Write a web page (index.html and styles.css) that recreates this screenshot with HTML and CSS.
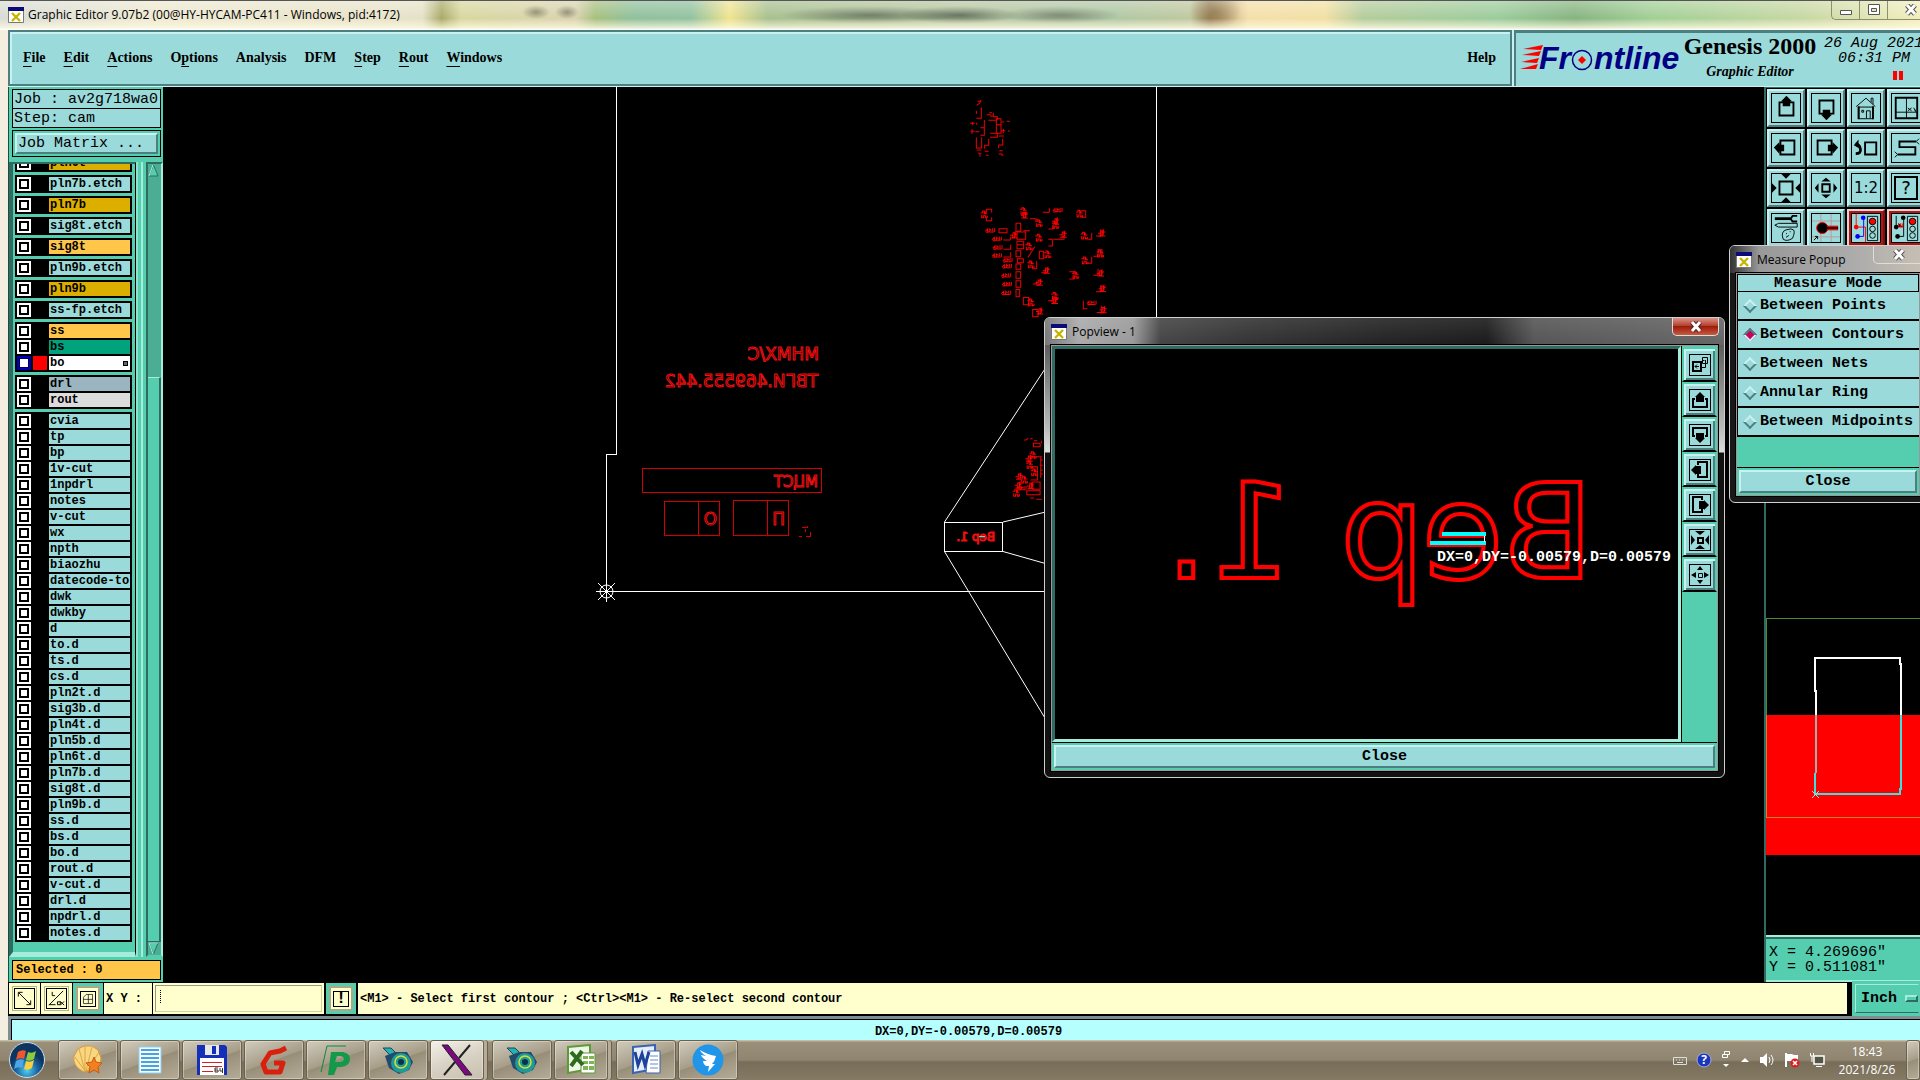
FILE: index.html
```html
<!DOCTYPE html>
<html lang="en">
<head>
<meta charset="utf-8">
<title>Graphic Editor 9.07b2</title>
<link rel="stylesheet" href="styles.css">
</head>
<body>
<svg class="defs" aria-hidden="true">
  <defs>
    <symbol id="app" viewBox="0 0 16 16"><path fill="#fff" stroke="#777" d="M.5.5h15v15H.5z"/><path fill="#0a0a78" d="M0 0h16v4H0z"/><path stroke="#c8b400" stroke-width="2.4" d="M4 6l8 8M12 6l-8 8"/></symbol>
    <symbol id="up" viewBox="0 0 30 30"><path fill="none" stroke="#000" stroke-width="2" d="M8 9h15v14H8z"/><path d="M15.500 2l6 6h-2v5h-8V8h-2z"/></symbol>
    <symbol id="down" viewBox="0 0 30 30"><path fill="none" stroke="#000" stroke-width="2" d="M8 7h15v14H8z"/><path d="M15.500 28l6-6h-2v-5h-8v5h-2z"/></symbol>
    <symbol id="left" viewBox="0 0 30 30"><path fill="none" stroke="#000" stroke-width="2" d="M9 7h15v15H9z"/><path d="M2 14.500l6-6v3h5v7H8v3z"/></symbol>
    <symbol id="right" viewBox="0 0 30 30"><path fill="none" stroke="#000" stroke-width="2" d="M6 7h15v15H6z"/><path d="M28 14.500l-6-6v3h-5v7h5v3z"/></symbol>
    <symbol id="zoomin" viewBox="0 0 30 30"><path fill="none" stroke="#000" stroke-width="2" d="M8 8h14v14H8z"/><path d="M10 0h10l-5 5zM10 30h10l-5-5zM0 10v10l5-5zM30 10v10l-5-5z"/></symbol>
    <symbol id="zoomout" viewBox="0 0 30 30"><path fill="none" stroke="#000" stroke-width="2" d="M11 11h8v8h-8z"/><path d="M10 8h10l-5-4zM10 22h10l-5 4zM7 10v10l-4-5zM23 10v10l4-5z"/></symbol>
    <symbol id="s-up" viewBox="0 0 20 20"><path fill="none" stroke="#000" stroke-width="2" d="M5 9H3v8h14V9h-2"/><path d="M10 2l5 5h-1v5H6V7H5z"/></symbol>
    <symbol id="s-down" viewBox="0 0 20 20"><path fill="none" stroke="#000" stroke-width="2" d="M5 11H3V3h14v8h-2"/><path d="M10 18l5-5h-1V8H6v5H5z"/></symbol>
    <symbol id="s-left" viewBox="0 0 20 20"><path fill="none" stroke="#000" stroke-width="2" d="M8 5V2h9v15H8v-3"/><path d="M1 10l5-5v1h5v8H6v1z"/></symbol>
    <symbol id="s-right" viewBox="0 0 20 20"><path fill="none" stroke="#000" stroke-width="2" d="M12 5V2H3v15h9v-3"/><path d="M19 10l-5-5v1H9v8h5v1z"/></symbol>
    <g id="b1" fill="none" stroke="#f00" stroke-width="3"><path d="M0 6h6v-5h5v10M3 12v9h5v-6h7v8M14 2v7h6M12 20h8v-5"/></g>
    <g id="b2" fill="none" stroke="#f00" stroke-width="3"><path d="M0 14h8v6h6V6h-5v8M16 2v16M12 10h10M2 22h20"/></g>
    <g id="b3" fill="none" stroke="#f00" stroke-width="3"><path d="M0 9l7-7v9h6V2l6 4M2 12h6M12 11h14M22 0v9M28 0v11"/></g>
  </defs>
</svg>

<header class="titlebar">
  <svg class="app-icon"><use href="#app"/></svg>
  <h1>Graphic Editor 9.07b2 (00@HY-HYCAM-PC411 - Windows, pid:4172)</h1>
  <div class="caption">
    <button type="button" aria-label="Minimize"><svg width="14" height="12"><path fill="#fff" stroke="#555" d="M1.500 6.500h11v4h-11z"/></svg></button>
    <button type="button" aria-label="Maximize"><svg width="14" height="12"><path fill="#fff" stroke="#555" fill-rule="evenodd" d="M1.500.500h11v10h-11zM4.500 4.500h5v3h-5z"/></svg></button>
    <button type="button" class="last" aria-label="Close"><svg width="14" height="12"><path stroke="#555" stroke-width="5" d="M3 1l8 9M11 1l-8 9"/><path stroke="#fff" stroke-width="3" d="M3 1l8 9M11 1l-8 9"/></svg></button>
  </div>
</header>

<main class="app">
  <div class="top">
    <nav class="menubar">
      <a href="#"><u>F</u>ile</a><a href="#"><u>E</u>dit</a><a href="#"><u>A</u>ctions</a><a href="#">O<u>p</u>tions</a><a href="#">Analysis</a><a href="#">DFM</a><a href="#"><u>S</u>tep</a><a href="#"><u>R</u>out</a><a href="#"><u>W</u>indows</a>
      <a href="#" class="help">Help</a>
    </nav>
    <div class="brand">
      <svg class="logo" width="162" height="36" viewBox="0 0 162 36" role="img" aria-label="Frontline">
        <path fill="#f00" d="M3 8l20-4-2 5zM2 14l19-4-2 5zM1 21l18-4-2 5zM0 28l18-5-2 5z"/>
        <text x="19" y="28">Fr</text><text x="74" y="28">ntline</text>
        <circle cx="62" cy="19" r="9.500" fill="none" stroke="#000084" stroke-width="1.500"/><path fill="#f00" d="M62 15l4 4-4 4-4-4z"/>
      </svg>
      <div class="product"><strong>Genesis 2000</strong><em>Graphic Editor</em></div>
      <div class="clock"><span>26 Aug 2021</span><span class="time">06:31 PM</span><i class="pause"></i></div>
    </div>
  </div>

  <div class="work">
    <aside class="side">
      <div class="info">Job : av2g718wa0</div>
      <div class="info">Step: cam</div>
      <div class="matrix"><button type="button">Job Matrix ...</button></div>
      <div class="list">
        <div class="layers">
          <div class="group"><label><input type="checkbox"><span class="power">pln6t</span></label></div>
          <div class="group"><label><input type="checkbox"><span>pln7b.etch</span></label></div>
          <div class="group"><label><input type="checkbox"><span class="power">pln7b</span></label></div>
          <div class="group"><label><input type="checkbox"><span>sig8t.etch</span></label></div>
          <div class="group"><label><input type="checkbox"><span class="signal">sig8t</span></label></div>
          <div class="group"><label><input type="checkbox"><span>pln9b.etch</span></label></div>
          <div class="group"><label><input type="checkbox"><span class="power">pln9b</span></label></div>
          <div class="group"><label><input type="checkbox"><span>ss-fp.etch</span></label></div>
          <div class="group">
            <label><input type="checkbox"><span class="signal">ss</span></label>
            <label><input type="checkbox"><span class="mask">bs</span></label>
            <label class="active"><input type="checkbox" checked><span class="silk">bo<i class="grip"></i></span></label>
          </div>
          <div class="group">
            <label><input type="checkbox"><span class="drill">drl</span></label>
            <label><input type="checkbox"><span class="rout">rout</span></label>
          </div>
          <div class="group">
            <label><input type="checkbox"><span>cvia</span></label>
            <label><input type="checkbox"><span>tp</span></label>
            <label><input type="checkbox"><span>bp</span></label>
            <label><input type="checkbox"><span>1v-cut</span></label>
            <label><input type="checkbox"><span>1npdrl</span></label>
            <label><input type="checkbox"><span>notes</span></label>
            <label><input type="checkbox"><span>v-cut</span></label>
            <label><input type="checkbox"><span>wx</span></label>
            <label><input type="checkbox"><span>npth</span></label>
            <label><input type="checkbox"><span>biaozhu</span></label>
            <label><input type="checkbox"><span>datecode-to</span></label>
            <label><input type="checkbox"><span>dwk</span></label>
            <label><input type="checkbox"><span>dwkby</span></label>
            <label><input type="checkbox"><span>d</span></label>
            <label><input type="checkbox"><span>to.d</span></label>
            <label><input type="checkbox"><span>ts.d</span></label>
            <label><input type="checkbox"><span>cs.d</span></label>
            <label><input type="checkbox"><span>pln2t.d</span></label>
            <label><input type="checkbox"><span>sig3b.d</span></label>
            <label><input type="checkbox"><span>pln4t.d</span></label>
            <label><input type="checkbox"><span>pln5b.d</span></label>
            <label><input type="checkbox"><span>pln6t.d</span></label>
            <label><input type="checkbox"><span>pln7b.d</span></label>
            <label><input type="checkbox"><span>sig8t.d</span></label>
            <label><input type="checkbox"><span>pln9b.d</span></label>
            <label><input type="checkbox"><span>ss.d</span></label>
            <label><input type="checkbox"><span>bs.d</span></label>
            <label><input type="checkbox"><span>bo.d</span></label>
            <label><input type="checkbox"><span>rout.d</span></label>
            <label><input type="checkbox"><span>v-cut.d</span></label>
            <label><input type="checkbox"><span>drl.d</span></label>
            <label><input type="checkbox"><span>npdrl.d</span></label>
            <label><input type="checkbox"><span>notes.d</span></label>
          </div>
        </div>
        <div class="rail"></div>
        <div class="scroll">
          <svg width="11" height="13"><path fill="#55ceb0" stroke="#2d6f60" d="M5.500 1L10 12H1z"/><path stroke="#a8efdc" d="M5 1L1 12"/></svg>
          <div class="thumb"></div>
          <svg width="11" height="13"><path fill="#55ceb0" stroke="#2d6f60" d="M5.500 12L10 1H1z"/><path stroke="#a8efdc" d="M10 1H1l4 11" fill="none"/></svg>
        </div>
      </div>
      <div class="selected">Selected : 0</div>
    </aside>

    <section class="canvas" aria-label="Board view">
      <svg width="100%" height="100%" viewBox="163 87 1601 895" preserveAspectRatio="xMinYMin meet">
        <g fill="none" stroke="#fff" shape-rendering="crispEdges">
          <path d="M616.500 87V454.500H606.500V591.500H1156.500V87"/>
          <path d="M944.500 522.500h58v29h-58z"/>
        </g>
        <g fill="none" stroke="#fff"><path d="M944.500 522L1060 346M944.500 551.500L1060 743M1003 522l60-14M1003 551.500l60 17"/>
          <circle cx="606.500" cy="591.500" r="6.500"/><path d="M596 591.500h20M606.500 581v21M598 583l17 17M615 583l-17 17"/></g>
        <g fill="none" stroke="#d00000" shape-rendering="crispEdges">
          <path d="M642.500 468.500h179v24h-179zM664.500 501.500h55v34h-55zM698.500 501.500v34M733.500 500.500h55v35h-55zM767.500 500.500v35M799 536.500h3M806 536.500h4v-5M802 527.500h5v-2M805 528.500v3"/>
        </g>
        <g class="etched">
          <text class="s17" transform="translate(819 360) scale(-1 1)">МНМХ/С</text>
          <text class="s17" transform="translate(818 387) scale(-1 1)">ТВГИ.469555.442</text>
          <text class="s15" transform="translate(818 487) scale(-1 1)">МЦСТ</text>
          <text class="s17" transform="translate(717 525) scale(-1 1)">О</text>
          <text class="s17" transform="translate(785 525) scale(-1 1)">П</text>
          <text class="tag" transform="translate(995 541) scale(-1 1)">Вер 1.</text>
        </g>
        <path stroke="#0ff" d="M979 536.500h6"/>
        <g transform="translate(940 80) scale(.3334)" fill="none" stroke="#e00" stroke-width="3">
          <path d="M110 76l10-8 2-8M112 64h12M124 82v33h-15M109 92v10M90 130h14M98 126v10M110 134v-6M133 120v46h-12M121 143h12M92 154h12M96 148v14M106 155h12M145 121h25M140 104h12M148 98h8M150 108h8M160 98v12h12v10M169 116h14v44h-14zM169 134h14M186 126h6M200 124h10M150 160h22v12h-22M184 152h12M190 146v14M204 153h6M176 168h16M109 172v32h16v-32M110 210h14M114 220h10M120 230v-8M146 176v20h-12v10M134 214h12M138 226h8M188 176v19h-12v10M178 212h10M176 222h12M184 226h6"/>
          <path d="M155 398v-10h-16v10M155 412v10h-16v-10M177 446h24v12h-24zM190 480h22M211 470v10M190 508h22v-14M190 531h22v-14M228 430h14v24h-14zM231 456h26v22h-26zM231 484h20v10h-20zM231 494h20v12h-20zM228 512h14v18h-14zM232 536h18v12h-18zM228 552h14v16h-14zM228 575h14v20h-14zM228 602h14v20h-14zM228 628h11v22h-11zM250 452h20M270 416h18v8M298 514h12v22h-12zM276 566h14v-22M308 397h20v-12M325 447h14v-12M340 478h32v-10M325 478h12v20h-12M422 392h15v20h-12M442 478h13v-20M442 550h13v-20M460 529h14v-20h12v20M388 575h14v22h-14M460 586h14v-20M468 635h14v-20M430 662v24h12M468 468h14v-20M470 697h14v-20M250 652h16v22h-16zM278 688h16v22h-16zM278 612h12v-10M325 662h14v-14M304 578h12v-12"/>
          <use href="#b1" x="122" y="392"/><use href="#b1" x="240" y="382"/><use href="#b2" x="242" y="392"/><use href="#b3" x="136" y="445"/><use href="#b3" x="156" y="470"/><use href="#b3" x="158" y="496"/><use href="#b3" x="156" y="520"/><use href="#b2" x="210" y="452"/><use href="#b3" x="188" y="534"/><use href="#b3" x="186" y="552"/><use href="#b3" x="184" y="580"/><use href="#b3" x="186" y="606"/><use href="#b3" x="184" y="632"/><use href="#b1" x="286" y="418"/><use href="#b1" x="286" y="462"/><use href="#b2" x="336" y="410"/><use href="#b1" x="336" y="424"/><use href="#b3" x="338" y="384"/><use href="#b1" x="408" y="390"/><use href="#b2" x="358" y="450"/><use href="#b1" x="422" y="456"/><use href="#b2" x="474" y="446"/><use href="#b1" x="312" y="512"/><use href="#b1" x="262" y="542"/><use href="#b2" x="308" y="558"/><use href="#b2" x="286" y="594"/><use href="#b1" x="424" y="530"/><use href="#b1" x="470" y="510"/><use href="#b1" x="396" y="574"/><use href="#b2" x="470" y="566"/><use href="#b2" x="476" y="612"/><use href="#b1" x="334" y="636"/><use href="#b2" x="332" y="648"/><use href="#b1" x="262" y="656"/><use href="#b2" x="288" y="680"/><use href="#b3" x="440" y="662"/><use href="#b2" x="478" y="676"/><use href="#b1" x="256" y="488"/><path d="M264 532l20-32"/>
        </g>
        <g transform="translate(580 320) scale(.3334)" fill="none" stroke="#e00" stroke-width="3">
          <path d="M1332 360h6l6-6M1350 356h8M1362 362h10M1360 370h20v10h-20zM1384 362v8M1352 410h34M1382 410v64M1388 420h-8M1388 436h-8M1388 450h-8M1388 462h-8M1352 440h20v40h-20M1358 486h22v22h-22zM1340 512h40v12h-40zM1350 534h12M1368 538h18"/>
          <use href="#b1" x="1348" y="394"/><use href="#b2" x="1336" y="402"/><use href="#b1" x="1338" y="424"/><use href="#b1" x="1352" y="446"/><use href="#b2" x="1306" y="456"/><use href="#b1" x="1322" y="468"/><use href="#b2" x="1304" y="482"/><use href="#b2" x="1340" y="484"/><use href="#b1" x="1298" y="508"/><use href="#b3" x="1310" y="498"/>
        </g>
      </svg>
    </section>

    <aside class="right">
      <div class="tools">
        <button type="button" aria-label="Pan up"><svg><use href="#up"/></svg></button>
        <button type="button" aria-label="Pan down"><svg><use href="#down"/></svg></button>
        <button type="button" aria-label="Home"><svg viewBox="0 0 30 30"><path fill="none" stroke="#000" d="M4.500 13.500L15 4.500l10 9M7.500 14v12.500h15V14zM15.500 26v-8h4v8M10.500 17.500h2v2h-2zM20.500 9V4.500h2V11"/><path stroke="#000" stroke-width="2" d="M7 13v14M22.500 13v14"/></svg></button>
        <button type="button" aria-label="Coordinates"><svg viewBox="0 0 30 30"><path fill="none" stroke="#000" stroke-width="2" d="M4 4h23v22H4z"/><path stroke="#000" d="M15.500 4v22M4 19.500h23M17 15l4 3M21 15l-4 3M23 15l2 2v2"/></svg></button>
        <button type="button" aria-label="Pan left"><svg><use href="#left"/></svg></button>
        <button type="button" aria-label="Pan right"><svg><use href="#right"/></svg></button>
        <button type="button" aria-label="Previous view"><svg viewBox="0 0 30 30"><path fill="none" stroke="#000" stroke-width="2" d="M14 9h12v13H14z"/><path fill="none" stroke="#000" stroke-width="3" d="M4 21q6 0 5-5t-5-5"/><path d="M2 12l5-6v9z"/></svg></button>
        <button type="button" aria-label="Serpentine"><svg viewBox="0 0 30 30"><path fill="none" stroke="#000" stroke-width="2" d="M26 8H8v6h17v8H6"/><path fill="none" stroke="#000" d="M29 5l-3 3 3 3M3 19l3 3-3 3"/></svg></button>
        <button type="button" aria-label="Zoom in"><svg><use href="#zoomin"/></svg></button>
        <button type="button" aria-label="Zoom out"><svg><use href="#zoomout"/></svg></button>
        <button type="button" class="ratio"><span>1:2</span></button>
        <button type="button" class="query"><span>?</span></button>
        <button type="button" aria-label="Setup"><svg viewBox="0 0 30 30"><path stroke="#000" stroke-width="3" d="M3 5h17"/><path fill="none" stroke="#000" stroke-width="2" d="M27 2h-5l-2 3 2 3h5"/><path fill="none" stroke="#000" d="M3 12l4-2h20v4H7zM12 27q-3-8 3-10t8 0-1 9q-6 4-10 1M15 21h1M19 19h1M18 23l-3 2"/></svg></button>
        <button type="button" aria-label="Snap"><svg viewBox="0 0 30 30"><path stroke="#b99" d="M9.500 0v30M20.500 0v30M0 7.500h30M0 24.500h30"/><path stroke="#f00" stroke-width="5" d="M12 15h16"/><circle cx="11" cy="15" r="6" stroke="#f00"/><path stroke="#000" stroke-width="2" d="M12 15h16"/><path fill="none" stroke="#000" d="M2 28l4-4M3 24h3v3"/></svg></button>
        <button type="button" class="hot" aria-label="Net colours"><svg viewBox="0 0 30 30"><path fill="none" stroke="#f00" d="M4.500 0v14h10v16"/><circle cx="4.500" cy="14" r="2.500" fill="#f00"/><path fill="none" stroke="#00f" d="M12.500 4v20H7"/><circle cx="12" cy="4" r="2.500" fill="#00f"/><circle cx="6" cy="24" r="2.500" fill="#00f"/><path fill="none" stroke="#000" d="M16.500 2.500h11v26h-11z"/><circle cx="22" cy="8" r="3.500" fill="#f00" stroke="#000"/><circle cx="22" cy="16" r="3" fill="none" stroke="#000"/><circle cx="22" cy="23" r="3" fill="none" stroke="#000"/></svg></button>
        <button type="button" class="hot" aria-label="Net checks"><svg viewBox="0 0 30 30"><path fill="none" stroke="#000" d="M4.500 2v12M12.500 4v20H7"/><path stroke="#f00" d="M7 10v4h5M9 10v4M11 10v4"/><circle cx="4.500" cy="14" r="2.500"/><circle cx="12" cy="4" r="2.500"/><circle cx="6" cy="24" r="2.500"/><path fill="none" stroke="#000" d="M16.500 2.500h11v26h-11z"/><circle cx="22" cy="8" r="3.500" fill="#f00" stroke="#000"/><circle cx="22" cy="16" r="3" fill="none" stroke="#000"/><circle cx="22" cy="23" r="3" fill="none" stroke="#000"/></svg></button>
      </div>
      <div class="map">
        <svg width="100%" height="100%" viewBox="1766 250 154 684" preserveAspectRatio="xMinYMin slice" shape-rendering="crispEdges">
          <path fill="#f00" d="M1766 714h160v140h-160z"/>
          <path fill="none" stroke="#4c8c2c" d="M1926 617.500h-159.500V714"/><path fill="none" stroke="#d08030" d="M1766.500 714v102.500H1926"/>
          <path fill="none" stroke="#fff" stroke-width="2" d="M1816 714v-24h-1v-33h85v6h1v51"/>
          <path stroke="#aaa" stroke-width="2" d="M1816 714v58"/>
          <path fill="none" stroke="#3fe0e0" stroke-width="2" d="M1901 714v74h-1v5h-85v-21"/>
          <path stroke="#bdd" d="M1812 790l7 7M1819 790l-7 7"/>
        </svg>
      </div>
      <div class="coords"><span>X = 4.269696"</span><span>Y = 0.511081"</span></div>
    </aside>
  </div>

  <div class="command">
    <button type="button" class="mode" aria-label="Distance"><svg viewBox="0 0 20 20"><path stroke="#000" fill="none" d="M4 4l12 12M3.500 8V3.500H8M16.500 12v4.500H12"/></svg></button>
    <button type="button" class="mode" aria-label="Angle"><svg viewBox="0 0 20 20"><path stroke="#000" fill="none" d="M2 17L17 2M2 16.500h7M5.500 3v4h3M11 13.500h3v3h-3zM14 13l4 4M18 13l-4 4"/></svg></button>
    <button type="button" class="mode on" aria-label="Grid"><svg viewBox="0 0 20 20"><path stroke="#000" fill="none" d="M3.500 16.500v-9l4-4h9v13zM3.500 10.500h13M10.500 3.500v13"/></svg></button>
    <label class="xy" for="xy">X Y :</label>
    <input id="xy" class="entry" type="text">
    <button type="button" class="mode on alert"><span>!</span></button>
    <output class="hint">&lt;M1&gt; - Select first contour ; &lt;Ctrl&gt;&lt;M1&gt; - Re-select second contour</output>
    <button type="button" class="unit">Inch<i></i></button>
  </div>
  <div class="status">DX=0,DY=-0.00579,D=0.00579</div>
</main>

<footer class="taskbar">
  <button type="button" class="start" aria-label="Start"><svg width="38" height="38" viewBox="0 0 38 38"><defs><radialGradient id="orb" cy=".8"><stop offset="0" stop-color="#4fd0f5"/><stop offset=".6" stop-color="#1d65a0"/><stop offset="1" stop-color="#0d3562"/></radialGradient></defs><circle cx="19" cy="19" r="17.500" fill="url(#orb)" stroke="#cfe0ea"/><path fill="#f0562c" d="M10 11q4-3 8-1l-2 8q-4-2-8 1z"/><path fill="#8ccc3a" d="M20 11q4 2 8-1l-2 8q-4 3-8 1z"/><path fill="#4aa8e8" d="M8 20q4-3 8-1l-2 8q-4-2-8 1z"/><path fill="#fbcf3b" d="M18 20q4 2 8-1l-2 8q-4 3-8 1z"/></svg></button>
  <button type="button" aria-label="Shell"><svg viewBox="0 0 32 32"><path fill="#f7d684" stroke="#d89a35" d="M12 28Q0 22 2 12L6 5l6-3 8 0 6 4 3 8-1 8z"/><path stroke="#e2a63c" d="M13 27L3 13M13 27L7 5M13 27V2M14 27l6-24M15 27L27 8"/><path fill="#f08020" stroke="#c85a10" d="M22 13l2 5 6 1-4 4 1 6-5-3-5 3 1-6-4-4 6-1z"/></svg></button>
  <button type="button" aria-label="Notepad"><svg viewBox="0 0 32 32"><path fill="#f2fbff" stroke="#8fd0f0" d="M5 3h22v26H5z"/><path stroke="#4aa3dc" stroke-width="2" d="M7 6h18M7 10h18M7 14h18M7 18h18M7 22h18M7 26h18"/></svg></button>
  <button type="button" aria-label="Backup"><svg viewBox="0 0 32 32"><path fill="#1530b8" d="M1 1h28l2 2v28H1z"/><path fill="#e8e8e8" d="M9 1h14v10H9z"/><path fill="#1530b8" d="M16 2h4v8h-4z"/><path fill="#fff" d="M4 14h24v17H4z"/><path stroke="#c22" d="M6 18.500h20M6 22.500h20M6 27.500h11"/><path stroke="#333" fill="none" d="M22 24h-3v4h3v-2h-3M24 24v3h3M26.500 24v5"/></svg></button>
  <button type="button" aria-label="Genesis"><svg viewBox="0 0 32 32"><path fill="none" stroke="#d8200c" stroke-width="5" stroke-linejoin="round" d="M28 4l-6 3-10 2-7 11 3 8h14l3-9h-9"/></svg></button>
  <button type="button" aria-label="Project"><svg viewBox="0 0 32 32"><path fill="none" stroke="#0a8a3c" d="M1 28L7 2h19"/><path fill="#12994a" d="M11 8h12q8 2 7 8t-9 7h-4l-3 8H8zM17 12l-2 6h5q4-1 4-3t-3-3z"/></svg></button>
  <button type="button" aria-label="Viewer"><svg viewBox="0 0 32 32"><g id="eye"><path fill="#1fb5b5" stroke="#245" d="M1 4h8l5 5-5 3z"/><path fill="#244a6a" d="M3 12l10-4 12 0 6 10-4 8-10 4-10-6z"/><circle cx="19" cy="19" r="10" fill="#1f9a9a"/><circle cx="19" cy="18" r="6" fill="none" stroke="#d8e030" stroke-width="1.500"/><circle cx="19" cy="18" r="3" fill="#08324a"/></g></svg></button>
  <button type="button" class="stack lit" aria-label="X server"><svg viewBox="0 0 32 32"><path fill="#7a0a80" stroke="#222" d="M1 1h6l24 30h-7z"/><path stroke="#222" stroke-width="2" d="M29 1L18 14M14 18L3 31"/></svg></button>
  <button type="button" aria-label="Viewer two"><svg viewBox="0 0 32 32"><use href="#eye"/></svg></button>
  <button type="button" class="stack" aria-label="Spreadsheet"><svg viewBox="0 0 32 32"><path fill="#eef6e6" stroke="#5d9a3a" stroke-width="2" d="M3 3l22-2v24l-22 4z"/><path fill="#fff" stroke="#5d9a3a" d="M16 9h14v20H16z"/><path fill="#7fb653" d="M18 12h5v3h-5zM24 12h5v3h-5zM18 17h5v3h-5zM24 17h5v3h-5zM18 22h5v4h-5zM24 22h5v4h-5z"/><path stroke="#2c6a1c" stroke-width="4" d="M6 8l12 13M17 7L6 22"/></svg></button>
  <button type="button" aria-label="Word processor"><svg viewBox="0 0 32 32"><path fill="#e6eefa" stroke="#3a62b0" stroke-width="2" d="M3 3l22-2v24l-22 4z"/><path fill="#fff" stroke="#3a62b0" d="M18 7h12v22H16z"/><path stroke="#6a8ac8" d="M20 12h8M20 16h8M20 20h8M20 24h8"/><path fill="none" stroke="#1d429a" stroke-width="3" d="M5 8l3 13 4-11 3 11 4-13"/></svg></button>
  <button type="button" aria-label="Messenger"><svg viewBox="0 0 32 32"><circle cx="16" cy="16" r="15.500" fill="#2196e8"/><path fill="#fff" d="M8 6q8 5 16 6-1 5-4 8h3l-7 8 1-6h-3q-3-2-3-5l4 0q-5-3-6-6l5 1q-5-3-6-6z"/></svg></button>
  <div class="tray">
    <svg width="14" height="9"><path fill="none" stroke="#ddd" d="M.500 1.500h13v7H.500zM3 4h1M6 4h1M9 4h1M4 6.500h6"/></svg>
    <svg width="16" height="16"><circle cx="8" cy="8" r="7" fill="#1a35c0" stroke="#aac"/><text x="8" y="12" text-anchor="middle">?</text></svg>
    <svg width="10" height="20"><path fill="none" stroke="#fff" d="M3.500 1.500h5v3h-5zM1.500 4.500h5v3h-5z"/><path fill="#fff" d="M2 14h6l-3 3z"/></svg>
    <svg width="10" height="8"><path fill="#fff" d="M1 6h8L5 2z"/></svg>
    <svg width="16" height="16"><path fill="#fff" d="M1 5h3l4-4v14l-4-4H1z"/><path fill="none" stroke="#fff" d="M10 5q2 3 0 6M12 3q4 5 0 10"/></svg>
    <svg width="16" height="16"><path fill="#fff" d="M1 1h2v14H1zM3 2h5l2 1h4v7H9L7 9H3z"/><circle cx="11" cy="11" r="4.500" fill="#d82020"/><path stroke="#fff" stroke-width="1.500" d="M9 9l4 4M13 9l-4 4"/></svg>
    <svg width="16" height="16"><path fill="#554" stroke="#fff" stroke-width="1.500" d="M5 4h10v8H5z"/><path stroke="#fff" fill="none" d="M7 14.500h6M1.500 1v3h3V1M3 4v6"/></svg>
    <div class="datetime"><span>18:43</span><span>2021/8/26</span></div>
  </div>
  <button type="button" class="desktop" aria-label="Show desktop"></button>
</footer>

<section class="window popview">
  <header><svg class="app-icon"><use href="#app"/></svg><h2>Popview - 1</h2>
    <button type="button" class="red" aria-label="Close Popview"><svg width="14" height="12"><path stroke="#522" stroke-width="5" d="M3 1l8 9M11 1l-8 9"/><path stroke="#fff" stroke-width="3" d="M3 1l8 9M11 1l-8 9"/></svg></button></header>
  <div class="body">
    <div class="view">
      <div class="screen">
        <svg width="100%" height="100%" viewBox="1055 349 623 390" preserveAspectRatio="xMidYMid meet">
          <text class="big" x="0 90 169 255 300 386" transform="translate(1593 578) scale(-1 1)">Вер 1.</text>
          <path stroke="#0ff" stroke-width="4" d="M1442 534h44M1430 543h56"/><path stroke="#fff" d="M1484.500 536v6"/>
          <text class="measure" x="1437" y="561">DX=0,DY=-0.00579,D=0.00579</text>
        </svg>
      </div>
      <div class="strip">
        <button type="button" aria-label="Copy view"><svg viewBox="0 0 20 20"><path fill="none" stroke="#000" stroke-width="2" d="M3 7h8v9H3z"/><path fill="none" stroke="#000" d="M12.500 2.500h5v6h-5zM14.500 5.500h-2M15.500 5v7.500H12M9 11.500H5M7 9.500l-2 2 2 2"/></svg></button>
        <button type="button" aria-label="Pan up"><svg><use href="#s-up"/></svg></button>
        <button type="button" aria-label="Pan down"><svg><use href="#s-down"/></svg></button>
        <button type="button" aria-label="Pan left"><svg><use href="#s-left"/></svg></button>
        <button type="button" aria-label="Pan right"><svg><use href="#s-right"/></svg></button>
        <button type="button" aria-label="Zoom in"><svg viewBox="0 0 20 20"><path fill="none" stroke="#000" stroke-width="2" d="M8 8h5v5H8z"/><path d="M5 1h10l-5 4zM5 19h10l-5-4zM1 5v10l4-5zM19 5v10l-4-5z"/></svg></button>
        <button type="button" aria-label="Zoom out"><svg viewBox="0 0 20 20"><path fill="none" stroke="#000" d="M8.500 8.500h4v4h-4z"/><path d="M7 5h6l-3-4zM7 15h6l-3 4zM6 7v6l-5-3zM14 7v6l5-3z"/></svg></button>
      </div>
    </div>
    <div class="close"><button type="button">Close</button></div>
  </div>
</section>

<section class="window measure-popup">
  <header><svg class="app-icon"><use href="#app"/></svg><h2>Measure Popup</h2>
    <button type="button" class="glass" aria-label="Close Measure Popup"><svg width="14" height="12"><path stroke="#555" stroke-width="5" d="M3 1l8 9M11 1l-8 9"/><path stroke="#fff" stroke-width="3" d="M3 1l8 9M11 1l-8 9"/></svg></button></header>
  <div class="body">
    <fieldset>
      <legend>Measure Mode</legend>
      <label><input type="radio" name="mode"><span>Between Points</span></label>
      <label><input type="radio" name="mode" checked><span>Between Contours</span></label>
      <label><input type="radio" name="mode"><span>Between Nets</span></label>
      <label><input type="radio" name="mode"><span>Annular Ring</span></label>
      <label><input type="radio" name="mode"><span>Between Midpoints</span></label>
    </fieldset>
    <div class="close"><button type="button">Close</button></div>
  </div>
</section>
</body>
</html>
```
FILE: styles.css
```css
:root {
  --pale: #9bdada;
  --hi: #c9f1f1;
  --lo: #4e7f80;
  --teal: #55ceb0;
  --teal-hi: #a5eddb;
  --teal-lo: #2f6b60;
  --cream: #ffffce;
  --mono: "Liberation Mono", monospace;
  --serif: "Liberation Serif", serif;
  --ui: "Open Sans", "Noto Sans", sans-serif;
}

* { box-sizing: border-box; }

body {
  margin: 0;
  height: 100vh;
  display: flex;
  flex-direction: column;
  overflow: hidden;
  position: relative;
  background: #f3eee0;
  color: #000;
  font-family: var(--mono);
}

button { padding: 0; margin: 0; border: 0; background: none; font: inherit; color: inherit; }
h1, h2 { margin: 0; font: 12px/16px var(--ui); white-space: nowrap; }
.defs { display: none; }
svg { display: block; }

/* Main window caption: glass over a blurred desktop */
.titlebar {
  height: 30px;
  flex: none;
  display: flex;
  align-items: center;
  gap: 4px;
  padding: 0 0 2px 8px;
  border-top: 1px solid #555;
  background:
    linear-gradient(rgba(255,255,255,.3), rgba(255,255,255,0) 60%, rgba(255,250,225,.7) 90%, #fff),
    radial-gradient(14px 7px at 536px 11px, rgba(60,60,40,.5), transparent),
    radial-gradient(12px 7px at 567px 11px, rgba(60,60,40,.5), transparent),
    radial-gradient(90px 9px at 870px 14px, rgba(50,60,50,.55), transparent),
    radial-gradient(60px 9px at 960px 14px, rgba(40,50,40,.6), transparent),
    radial-gradient(60px 9px at 1060px 14px, rgba(60,70,60,.5), transparent),
    radial-gradient(26px 20px at 1215px 10px, rgba(120,95,50,.6), transparent),
    linear-gradient(90deg, #d8dcd4, #eee9d2 8%, #e6e2c8 22%, #a9aa68 23%, #d8d8a0 24%, #d9d3b0 30%, #a8c080 31%, #90c09c 33%, #92c2a0 36%, #f0e490 38%, #a8c090 40%, #b8c8a4 50%, #b0c8a4 58%, #c0c8a0 62%, #a89068 63%, #f4dfaa 65%, #f2e0a4 69%, #b4cc9c 71%, #9ccc9c 78%, #86b480 82%, #a2cf96 86%, #c8d8a4 94%, #f2eebc);
}
.app-icon { width: 16px; height: 16px; flex: none; }
.caption { margin-left: auto; align-self: flex-start; display: flex; border: 1px solid #8e8e70; border-top: 0; border-right: 0; border-radius: 0 0 0 5px; }
.caption button { width: 28px; height: 18px; display: grid; place-items: center; border-right: 1px solid #8e8e70; }
.caption .last { width: 32px; padding-left: 14px; border-right: 0; }

.app { flex: 1; min-height: 0; margin-left: 8px; display: flex; flex-direction: column; background: #000; }

/* Menu and branding */
.top { height: 57px; flex: none; display: flex; background: var(--hi); }
.menubar {
  flex: 1;
  display: flex;
  align-items: center;
  gap: 18px;
  padding: 0 14px 0 13px;
  margin-bottom: 1px;
  background: var(--pale);
  border: 2px solid var(--lo);
  box-shadow: inset 2px 2px var(--hi);
  font: bold 14px/20px var(--serif);
}
.menubar a { color: #000; text-decoration: none; }
.menubar u { text-underline-offset: 4px; }
.help { margin-left: auto; }
.brand {
  width: 406px;
  flex: none;
  display: flex;
  align-items: flex-start;
  padding: 0 0 0 4px;
  margin: 0 0 1px 2px;
  background: var(--pale);
  border-top: 3px solid var(--lo);
  border-left: 2px solid var(--lo);
  overflow: hidden;
}
.logo { flex: none; margin-top: 8px; }
.logo text { font: italic bold 32px "Liberation Sans", sans-serif; fill: #000084; }
.product { width: 136px; flex: none; display: flex; flex-direction: column; align-items: center; font-family: var(--serif); font-weight: bold; white-space: nowrap; }
.product strong { font-size: 24px; line-height: 27px; }
.product em { font-size: 14px; line-height: 24px; }
.clock { margin-left: 6px; display: flex; flex-direction: column; font: italic 15px/15px var(--mono); -webkit-text-stroke: 0; white-space: pre; padding-top: 3px; }
.time { padding-left: 14px; }
.pause { width: 10px; height: 9px; margin: 5px 0 0 69px; border: solid #f00; border-width: 0 4px; }

.work { flex: 1; min-height: 0; display: flex; }

/* Layer panel */
.side { width: 155px; flex: none; display: flex; flex-direction: column; background: var(--teal); padding: 2px 2px 2px 3px; border-left: 1px solid #1d4a42; }
.info { height: 20px; flex: none; padding-left: 1px; background: var(--pale); border: 1px solid #000; font-size: 15px; line-height: 19px; white-space: pre; overflow: hidden; margin-bottom: -1px; }
.matrix { margin: 3px 0 5px; padding: 2px; border: 1px solid #000; flex: none; }
.matrix button { width: 100%; height: 21px; padding-left: 1px; text-align: left; font-size: 15px; line-height: 16px; background: var(--pale); border: 2px solid; border-color: var(--hi) var(--lo) var(--lo) var(--hi); }
.list { flex: 1; min-height: 0; display: flex; margin: 0 -2px 3px -3px; }
.layers {
  width: 127px;
  overflow: hidden;
  display: flex;
  flex-direction: column;
  gap: 3px;
  border-top: 2px solid var(--teal-lo);
  border-left: 4px solid var(--teal-lo);
  border-right: 1px solid #000;
  border-bottom: 5px solid var(--teal-hi);
  padding: 0 3px 0 2px;
}
.group { flex: none; background: #000; padding: 2px; display: flex; flex-direction: column; gap: 2px; }
.group:first-child { margin-top: -10px; }
.group label { display: flex; height: 14px; }
.group input { appearance: none; margin: 0; width: 14px; height: 14px; flex: none; border: 2px solid #fff; background: #fff; box-shadow: inset 0 0 0 2px #000; }
.group span { flex: 1; margin-left: 18px; padding-left: 1px; background: var(--pale); font: bold 12px/14px var(--mono); white-space: nowrap; overflow: hidden; }
.group .power { background: #dbae00; }
.group .signal { background: #ffc64a; }
.group .mask { background: #00a37c; }
.group .silk { background: #fff; display: flex; justify-content: space-between; align-items: center; }
.group .drill { background: #9ab5bf; }
.group .rout { background: #dcdcdc; }
.active { background: linear-gradient(90deg, #000 16px, #f00 16px, #f00 30px, #000 30px); }
.active input { border-color: #0000b4; box-shadow: inset 0 0 0 1px #000060; }
.grip { width: 5px; height: 5px; margin-right: 2px; border: 1px solid #000; background: #666; }
.rail { width: 10px; background: linear-gradient(90deg, #8fe3cd 2px, var(--teal) 2px 5px, var(--teal-hi) 5px 7px, var(--teal) 7px); }
.scroll { flex: 1; display: flex; flex-direction: column; background: #4bae94; border: 2px solid; border-color: var(--teal-lo) var(--teal-hi) var(--teal) var(--teal-lo); }
.scroll svg { flex: none; }
.thumb { flex: 1; margin-top: 200px; background: var(--teal); border-top: 1px solid var(--teal-hi); border-right: 2px solid var(--teal-lo); border-bottom: 1px solid var(--teal-lo); }
.selected { height: 20px; flex: none; padding-left: 3px; background: #ffc64a; border: 1px solid #000; font: bold 12px/18px var(--mono); }

/* Board view */
.canvas { flex: 1; min-width: 0; background: #000; }
.etched text { font-family: "DejaVu Sans", sans-serif; fill: #200000; stroke: #f01010; stroke-width: 1; }
.etched .s17 { font-size: 17px; }
.etched .s15 { font-size: 15px; }
.etched .tag { font-size: 12px; fill: #f00; }

/* Tool palette and overview */
.right { width: 156px; flex: none; display: flex; flex-direction: column; border-left: 2px solid var(--teal-lo); overflow: hidden; }
.tools { display: grid; grid-template-columns: repeat(4, 38px); gap: 2px; padding: 1px 0 3px 1px; flex: none; border-top: 1px solid var(--teal-lo); background: #000; }
.tools button { width: 38px; height: 38px; padding: 2px; background: var(--pale); border: 2px solid; border-color: var(--hi) var(--lo) var(--lo) var(--hi); }
.tools svg, .tools span { display: block; width: 30px; height: 30px; border: 1px solid #000; }
.tools .ratio span { font: 15px/28px "DejaVu Sans", sans-serif; }
.tools .query span { font: 18px/24px "DejaVu Sans", sans-serif; padding: 2px; outline: 2px solid #000; outline-offset: -5px; }
.tools .hot { background: #b01818; border-color: #e8d0d0 #801010 #801010 #e8d0d0; }
.hot svg { background: var(--pale); }
.map { flex: 1; min-height: 0; }
.coords { height: 47px; flex: none; padding: 8px 0 0 3px; display: flex; flex-direction: column; background: var(--teal); border-top: 2px solid var(--teal-hi); border-bottom: 2px solid var(--teal-hi); box-shadow: inset 0 2px var(--teal-lo); font-size: 15px; line-height: 15px; white-space: pre; }

/* Command line */
.command { height: 34px; flex: none; display: flex; align-items: stretch; padding: 1px 0 2px 1px; font: bold 12px/32px var(--mono); }
.mode { width: 31px; margin-right: 1px; flex: none; background: var(--cream); border: 3px solid var(--cream); outline: 1px solid #b5b58c; outline-offset: -4px; display: grid; place-items: center; }
.mode svg, .mode span { width: 21px; height: 21px; border: 1px solid #000; }
.mode.on { border-color: var(--teal); outline: 2px solid #a9a98a; outline-offset: -5px; width: 30px; }
.mode.alert { margin: 0 2px; }
.mode.on svg, .mode.on span { width: 16px; height: 16px; }
.mode.on span { font: bold 16px/14px var(--mono); }
.xy { width: 48px; padding-left: 2px; background: var(--cream); white-space: pre; }
.entry {
  width: 171px;
  margin-left: 1px;
  padding: 0 4px;
  border: 3px solid;
  border-color: #98987c #d0d0a4 #d0d0a4 #98987c;
  outline: 2px solid var(--cream);
  outline-offset: -2px;
  background: repeating-linear-gradient(#000 0 1px, transparent 1px 2px) 4px 4px / 1px 14px no-repeat var(--cream);
  font: inherit;
}
.hint { flex: 1; padding-left: 2px; background: var(--cream); white-space: nowrap; }
.unit { width: 66px; margin-left: 7px; flex: none; display: flex; align-items: center; gap: 8px; padding-left: 5px; font-size: 15px; background: var(--teal); border: 2px solid; border-color: var(--teal-hi) var(--teal) var(--teal-lo) var(--teal-hi); outline: 3px solid var(--teal); outline-offset: -1px; }
.unit i { width: 14px; height: 7px; border: 2px solid; border-color: var(--teal-hi) var(--teal-lo) var(--teal-lo) var(--teal-hi); }
.status { height: 24px; flex: none; padding-left: 6px; border-top: 3px solid #7d8f92; border-left: 3px solid #7d8f92; background: #b5ffff; box-shadow: inset 1px 1px #000; font: bold 12px/26px var(--mono); text-align: center; overflow: hidden; }

/* Taskbar */
.taskbar {
  height: 40px;
  flex: none;
  display: flex;
  gap: 2px;
  padding-left: 8px;
  background: linear-gradient(#d0cab6, #9a907a 6%, #8f8570 50%, #776d58 55%, #857a64);
}
.taskbar > button { width: 60px; flex: none; display: grid; place-items: center; border: 1px solid #6b614c; border-radius: 3px; box-shadow: inset 0 0 0 1px rgba(255,255,255,.35); background: linear-gradient(160deg, #d2ccbd, #a69d88 50%, #988e78 51%, #b5ac99); }
.taskbar > button svg { width: 32px; height: 32px; }
.taskbar > .start { width: 38px; margin-right: 10px; border: 0; box-shadow: none; background: none; }
.taskbar > .start svg { width: 38px; height: 38px; }
.taskbar > .stack { width: 54px; margin-right: 6px; box-shadow: inset 0 0 0 1px rgba(255,255,255,.35), 3px 0 #b5ac99, 4px 0 #6b614c; }
.taskbar > .lit { background: linear-gradient(160deg, #f4f1ea, #d8d2c4 50%, #c8c0b0); }
.tray { margin-left: auto; display: flex; align-items: center; gap: 9px; color: #fff; }
.tray text { fill: #fff; font: bold 12px var(--ui); }
.datetime { width: 66px; margin-right: 4px; display: flex; flex-direction: column; text-align: center; font: 12px/18px var(--ui); padding-top: 1px; }
.taskbar > .desktop { width: 14px; }

/* Floating windows */
.window {
  position: absolute;
  display: flex;
  flex-direction: column;
  padding: 0 6px 6px;
  border: 1px solid #cfcfcf;
  border-radius: 6px;
  background: #181818;
}
.window > header { height: 26px; flex: none; display: flex; align-items: center; gap: 5px; }
.window > header > button { align-self: flex-start; margin-left: auto; width: 47px; height: 18px; display: grid; place-items: center; border: 1px solid #ddd; border-top: 0; border-radius: 0 0 5px 5px; }
.window > .body { flex: 1; min-height: 0; display: flex; flex-direction: column; border: 1px solid #999; outline: 1px solid #000; background: var(--teal); }
.popview { left: 1044px; top: 317px; width: 681px; height: 461px; background: linear-gradient(#666, #555 20px, #bbb 110px, #ddd 134px, #111 135px, #111); }
.popview > header { height: 27px; margin: 0 -6px; padding: 0 5px 0 6px; border-radius: 5px 5px 0 0; background: linear-gradient(rgba(255,255,255,.1), transparent), linear-gradient(90deg, #777, #aaa 5%, #999 13%, #444 17%, #333 30%, #222 50%, #1a1a1a 65%, #555 72%, #666); }
.window > header > .red { background: linear-gradient(#d89488, #b8402c 45%, #9c1c0c 50%, #c85a40); }
.close { padding: 2px; flex: none; border-top: 1px solid #000; }
.close button { display: block; width: 100%; height: 23px; background: var(--pale); border: 2px solid; border-color: var(--hi) var(--lo) var(--lo) var(--hi); font: bold 15px/20px var(--mono); }
.view { flex: 1; min-height: 0; display: flex; }
.screen { flex: 1; min-width: 0; background: #000; border: 3px solid; border-color: var(--teal-lo) var(--teal-hi) var(--teal-hi) var(--teal-lo); }
.big { font: 132px "DejaVu Sans", sans-serif; fill: none; stroke: #f00; stroke-width: 4; }
.measure { font: bold 15px var(--mono); fill: #fff; }
.strip { width: 36px; flex: none; display: flex; flex-direction: column; border-left: 1px solid #000; padding-top: 1px; }
.strip button { width: 35px; height: 35px; padding: 2px; background: var(--pale); border: 2px solid var(--teal); border-bottom-color: #000; box-shadow: inset 2px 2px var(--hi), inset -2px -2px var(--lo); display: grid; place-items: center; }
.strip svg { width: 22px; height: 22px; border: 1px solid #000; }

.measure-popup { left: 1729px; top: 245px; width: 198px; height: 258px; }
.measure-popup > header { height: 27px; margin: 0 -6px; padding: 0 1px 0 6px; border-radius: 5px 5px 0 0; background: linear-gradient(90deg, #333, #999 15%, #aaa 60%, #c8c0b4); }
.window > header > .glass { width: 52px; height: 18px; }
.measure-popup fieldset { flex: 1; margin: 0; padding: 0; border: 0; min-width: 0; }
.measure-popup legend { width: 100%; padding: 0; height: 18px; background: var(--pale); border: 1px solid #000; font: bold 15px/17px var(--mono); text-align: center; }
.measure-popup label { display: flex; align-items: center; gap: 3px; height: 29px; padding-left: 5px; background: var(--pale); border-bottom: 2px solid #000; border-left: 1px solid #000; font: bold 15px/18px var(--mono); white-space: nowrap; }
.measure-popup input { appearance: none; width: 10px; height: 10px; margin: 0 2px; flex: none; transform: rotate(45deg); border: 2px solid; border-color: var(--hi) var(--lo) var(--lo) var(--hi); }
.measure-popup input:checked { background: #c8005a; border-color: var(--lo) var(--hi) var(--hi) var(--lo); }
```
